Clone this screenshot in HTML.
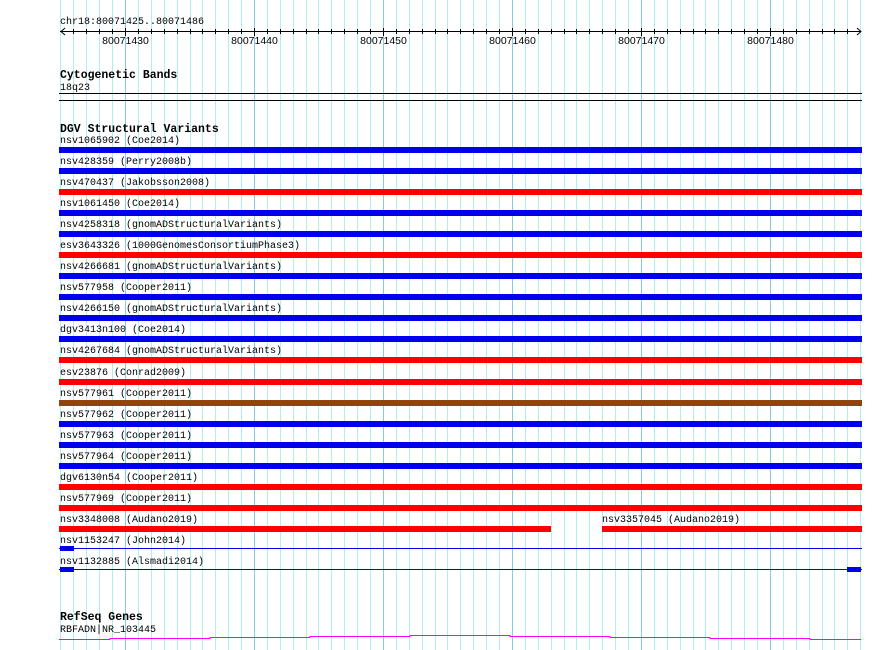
<!DOCTYPE html>
<html><head><meta charset="utf-8"><style>
html,body{margin:0;padding:0;background:#fff;width:890px;height:650px;overflow:hidden}
svg{display:block}
.m{font-family:"Liberation Mono",monospace;font-size:10px;fill:#000}
.b{font-family:"Liberation Mono",monospace;font-size:11.5px;font-weight:bold;fill:#000}
.s{font-family:"Liberation Sans",sans-serif;font-size:10.5px;fill:#000}
</style></head><body>
<svg width="890" height="650" xmlns="http://www.w3.org/2000/svg">
<path stroke="#b0eef2" stroke-width="1" fill="none" d="M60.5 0V650M73.5 0V650M86.5 0V650M99.5 0V650M112.5 0V650M138.5 0V650M151.5 0V650M164.5 0V650M177.5 0V650M190.5 0V650M202.5 0V650M215.5 0V650M228.5 0V650M241.5 0V650M267.5 0V650M280.5 0V650M293.5 0V650M306.5 0V650M318.5 0V650M331.5 0V650M344.5 0V650M357.5 0V650M370.5 0V650M396.5 0V650M409.5 0V650M422.5 0V650M435.5 0V650M447.5 0V650M460.5 0V650M473.5 0V650M486.5 0V650M499.5 0V650M525.5 0V650M538.5 0V650M551.5 0V650M564.5 0V650M576.5 0V650M589.5 0V650M602.5 0V650M615.5 0V650M628.5 0V650M654.5 0V650M667.5 0V650M680.5 0V650M693.5 0V650M705.5 0V650M718.5 0V650M731.5 0V650M744.5 0V650M757.5 0V650M783.5 0V650M796.5 0V650M809.5 0V650M822.5 0V650M834.5 0V650M847.5 0V650M860.5 0V650"/>
<path stroke="#88c8e8" stroke-width="1" fill="none" d="M125.5 0V650M254.5 0V650M383.5 0V650M512.5 0V650M641.5 0V650M770.5 0V650"/>
<path stroke="#000" stroke-width="1" fill="none" d="M73.5 29v5M86.5 29v5M99.5 29v5M112.5 29v5M138.5 29v5M151.5 29v5M164.5 29v5M177.5 29v5M190.5 29v5M202.5 29v5M215.5 29v5M228.5 29v5M241.5 29v5M267.5 29v5M280.5 29v5M293.5 29v5M306.5 29v5M318.5 29v5M331.5 29v5M344.5 29v5M357.5 29v5M370.5 29v5M396.5 29v5M409.5 29v5M422.5 29v5M435.5 29v5M447.5 29v5M460.5 29v5M473.5 29v5M486.5 29v5M499.5 29v5M525.5 29v5M538.5 29v5M551.5 29v5M564.5 29v5M576.5 29v5M589.5 29v5M602.5 29v5M615.5 29v5M628.5 29v5M654.5 29v5M667.5 29v5M680.5 29v5M693.5 29v5M705.5 29v5M718.5 29v5M731.5 29v5M744.5 29v5M757.5 29v5M783.5 29v5M796.5 29v5M809.5 29v5M822.5 29v5M834.5 29v5M847.5 29v5M125.5 28v8M254.5 28v8M383.5 28v8M512.5 28v8M641.5 28v8M770.5 28v8"/>
<text class="s" x="125.5" y="44" text-anchor="middle">80071430</text>
<text class="s" x="254.5" y="44" text-anchor="middle">80071440</text>
<text class="s" x="383.5" y="44" text-anchor="middle">80071450</text>
<text class="s" x="512.5" y="44" text-anchor="middle">80071460</text>
<text class="s" x="641.5" y="44" text-anchor="middle">80071470</text>
<text class="s" x="770.5" y="44" text-anchor="middle">80071480</text>
<text class="m" x="60" y="24">chr18:80071425..80071486</text>
<line x1="60" y1="31.5" x2="861" y2="31.5" stroke="#000"/>
<path d="M65 28 L61 31.5 L65 35 M857 28 L861 31.5 L857 35" stroke="#000" fill="none"/>
<text class="b" x="60" y="78">Cytogenetic Bands</text>
<text class="m" x="60" y="90">18q23</text>
<rect x="59" y="93" width="803" height="1" fill="#000"/>
<rect x="59" y="100" width="803" height="1" fill="#000"/>
<text class="b" x="60" y="132">DGV Structural Variants</text>

<text class="m" x="60" y="143">nsv1065902 (Coe2014)</text><rect x="59" y="147" width="803" height="6" fill="#0000ee"/>
<text class="m" x="60" y="164">nsv428359 (Perry2008b)</text><rect x="59" y="168" width="803" height="6" fill="#0000ee"/>
<text class="m" x="60" y="185">nsv470437 (Jakobsson2008)</text><rect x="59" y="189" width="803" height="6" fill="#ff0000"/>
<text class="m" x="60" y="206">nsv1061450 (Coe2014)</text><rect x="59" y="210" width="803" height="6" fill="#0000ee"/>
<text class="m" x="60" y="227">nsv4258318 (gnomADStructuralVariants)</text><rect x="59" y="231" width="803" height="6" fill="#0000ee"/>
<text class="m" x="60" y="248">esv3643326 (1000GenomesConsortiumPhase3)</text><rect x="59" y="252" width="803" height="6" fill="#ff0000"/>
<text class="m" x="60" y="269">nsv4266681 (gnomADStructuralVariants)</text><rect x="59" y="273" width="803" height="6" fill="#0000ee"/>
<text class="m" x="60" y="290">nsv577958 (Cooper2011)</text><rect x="59" y="294" width="803" height="6" fill="#0000ee"/>
<text class="m" x="60" y="311">nsv4266150 (gnomADStructuralVariants)</text><rect x="59" y="315" width="803" height="6" fill="#0000ee"/>
<text class="m" x="60" y="332">dgv3413n100 (Coe2014)</text><rect x="59" y="336" width="803" height="6" fill="#0000ee"/>
<text class="m" x="60" y="353">nsv4267684 (gnomADStructuralVariants)</text><rect x="59" y="357" width="803" height="6" fill="#ff0000"/>
<text class="m" x="60" y="375">esv23876 (Conrad2009)</text><rect x="59" y="379" width="803" height="6" fill="#ff0000"/>
<text class="m" x="60" y="396">nsv577961 (Cooper2011)</text><rect x="59" y="400" width="803" height="6" fill="#8b4513"/>
<text class="m" x="60" y="417">nsv577962 (Cooper2011)</text><rect x="59" y="421" width="803" height="6" fill="#0000ee"/>
<text class="m" x="60" y="438">nsv577963 (Cooper2011)</text><rect x="59" y="442" width="803" height="6" fill="#0000ee"/>
<text class="m" x="60" y="459">nsv577964 (Cooper2011)</text><rect x="59" y="463" width="803" height="6" fill="#0000ee"/>
<text class="m" x="60" y="480">dgv6130n54 (Cooper2011)</text><rect x="59" y="484" width="803" height="6" fill="#ff0000"/>
<text class="m" x="60" y="501">nsv577969 (Cooper2011)</text><rect x="59" y="505" width="803" height="6" fill="#ff0000"/>
<text class="m" x="60" y="522">nsv3348008 (Audano2019)</text>
<text class="m" x="602" y="522">nsv3357045 (Audano2019)</text>
<rect x="59" y="526" width="492" height="6" fill="#ff0000"/>
<rect x="602" y="526" width="260" height="6" fill="#ff0000"/>
<text class="m" x="60" y="543">nsv1153247 (John2014)</text>
<rect x="59" y="548" width="803" height="1" fill="#0000ee"/>
<rect x="60" y="546" width="14" height="5" fill="#0000ee"/>
<text class="m" x="60" y="564">nsv1132885 (Alsmadi2014)</text>
<rect x="59" y="569" width="803" height="1" fill="#0000ee"/>
<rect x="60" y="567" width="14" height="5" fill="#0000ee"/>
<rect x="847" y="567" width="14" height="5" fill="#0000ee"/>

<text class="b" x="60" y="620">RefSeq Genes</text>
<text class="m" x="60" y="632">RBFADN|NR_103445</text>
<path d="M59 639.5 H110 V638.5 H210 V637.5 H310 V636.5 H410 V635.5 H510 V636.5 H610 V637.5 H710 V638.5 H810 V639.5 H861" stroke="#ff00ff" fill="none"/>
</svg>
</body></html>
